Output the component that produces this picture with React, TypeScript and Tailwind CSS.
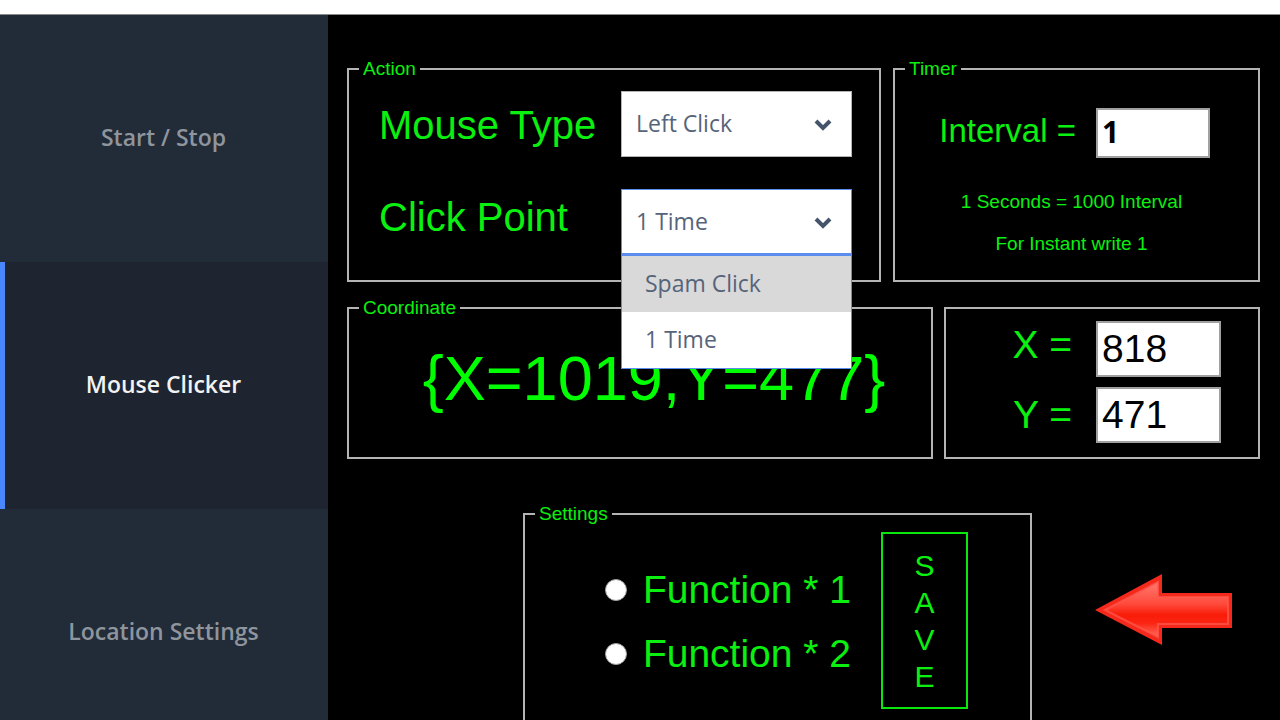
import React, { useState } from 'react';
import clsx from 'clsx';

// TYPES
type GroupBoxProps = {
  title: string;
  className?: string;
  children: React.ReactNode;
};

type ComboBoxProps = {
  id: string;
  value: string;
  options: string[];
  isOpen?: boolean;
  onChange: (value: string) => void;
};

// CONFIGS
const TABS = ['Start / Stop', 'Mouse Clicker', 'Location Settings'];
const MOUSE_TYPES = ['Left Click', 'Right Click'];
const CLICK_POINTS = ['Spam Click', '1 Time'];
const FUNCTIONS = ['Function * 1', 'Function * 2'];

const Chevron = () => (
  <svg
    viewBox="0 0 18 12"
    className="absolute right-5 top-7 w-[18px] h-3 pointer-events-none"
    fill="none"
    stroke="#44546a"
    strokeWidth="4"
  >
    <path d="M2 2l7 7 7-7" />
  </svg>
);

const ArrowLeft = () => (
  <svg viewBox="0 0 138 72" className="w-[138px] h-[72px]">
    <defs>
      <linearGradient id="arrowFill" x1="0" y1="0" x2="0" y2="1">
        <stop offset="0" stopColor="#ff7a70" />
        <stop offset="0.4" stopColor="#ff4a3c" />
        <stop offset="0.6" stopColor="#f81c08" />
        <stop offset="0.74" stopColor="#fb2412" />
        <stop offset="1" stopColor="#ff6a5c" />
      </linearGradient>
    </defs>
    <path d="M0 36L67 0v19h70v35H67v17z" fill="#f5281c" />
    <path
      d="M10 36L63 8v15h70v27H63v13z"
      fill="url(#arrowFill)"
      stroke="#ff5a4e"
      strokeWidth="2"
      strokeOpacity="0.7"
    />
  </svg>
);

const GroupBox = ({ title, className, children }: GroupBoxProps) => (
  <fieldset className={clsx('border-2 border-[#b4b4b4] min-w-0', className)}>
    <legend className="ml-2.5 px-1 text-[19px] leading-5">{title}</legend>
    {children}
  </fieldset>
);

const ComboBox = ({ id, value, options, isOpen, onChange }: ComboBoxProps) => (
  <div className="relative w-[231px] font-['Open_Sans',sans-serif] text-[23px] text-[#56647a]">
    <select
      id={id}
      value={value}
      onChange={(e) => onChange(e.target.value)}
      className={clsx(
        'block w-full h-[66px] appearance-none border bg-white pl-3.5 pb-0.5 outline-none',
        isOpen ? 'border-[#5b8dee]' : 'border-[#b4b4b4]',
      )}
    >
      {options.map((option) => (
        <option key={option}>{option}</option>
      ))}
    </select>
    <Chevron />
    {isOpen && (
      <ul className="absolute z-10 inset-x-0 top-16 border border-t-3 border-[#5b8dee] bg-white">
        {options.map((option, index) => (
          <li key={option}>
            <button
              type="button"
              onClick={() => onChange(option)}
              className={clsx(
                'block w-full h-14 pl-[23px] pb-0.5 text-left',
                index === 0 && 'bg-[#d9d9d9]',
              )}
            >
              {option}
            </button>
          </li>
        ))}
      </ul>
    )}
  </div>
);

const Sidebar = () => {
  const [activeTab, setActiveTab] = useState('Mouse Clicker');

  return (
    <nav className="w-[328px] shrink-0 bg-[#222b38]">
      {TABS.map((tab) => (
        <button
          key={tab}
          type="button"
          onClick={() => setActiveTab(tab)}
          className={clsx(
            "block w-full h-[247px] border-l-[5px] pr-1.5 pb-0.5 font-['Open_Sans',sans-serif] text-[23px] font-semibold",
            activeTab === tab
              ? 'border-[#4a86fc] bg-[#1e2530] text-[#f2f2f2]'
              : 'border-transparent text-[#8f959d]',
          )}
        >
          {tab}
        </button>
      ))}
    </nav>
  );
};

const App: React.FC = () => {
  const [mouseType, setMouseType] = useState('Left Click');
  const [clickPoint, setClickPoint] = useState('1 Time');

  return (
    <div className="h-screen flex flex-col overflow-hidden bg-black font-['Liberation_Sans',Arial,sans-serif] text-[#0af010]">
      <header className="h-[15px] shrink-0 border-b border-[#8a8a8a] bg-white" />
      <div className="flex flex-1 min-h-0">
        <Sidebar />

        <main className="flex-1 min-w-0 pl-[19px] pr-5 pt-11">
          <div className="flex gap-3">
            {/* Action */}
            <GroupBox title="Action" className="grow basis-[534px] h-[223px]">
              <div className="flex justify-between pl-[30px] pr-[27px]">
                <div className="flex flex-col gap-[52px] pt-[26px] text-[40px] leading-10">
                  <label htmlFor="mouseType">Mouse Type</label>
                  <label htmlFor="clickPoint">Click Point</label>
                </div>
                <div className="flex flex-col gap-8 pt-3">
                  <ComboBox
                    id="mouseType"
                    value={mouseType}
                    options={MOUSE_TYPES}
                    onChange={setMouseType}
                  />
                  <ComboBox
                    id="clickPoint"
                    value={clickPoint}
                    options={CLICK_POINTS}
                    isOpen
                    onChange={setClickPoint}
                  />
                </div>
              </div>
            </GroupBox>

            {/* Timer */}
            <GroupBox title="Timer" className="grow basis-[367px] h-[223px]">
              <div className="flex items-center justify-end gap-5 pr-12 pt-[29px]">
                <label
                  htmlFor="interval"
                  className="pb-1 text-[33px] leading-10"
                >
                  Interval =
                </label>
                <input
                  id="interval"
                  defaultValue="1"
                  className="w-[114px] h-[50px] border-2 border-[#a0a0a0] bg-white px-1 pb-1 font-['Open_Sans',sans-serif] text-3xl font-bold text-black"
                />
              </div>
              <div className="flex flex-col gap-[18px] pt-8 pr-2.5 text-center text-[19px] leading-6">
                <p>1 Seconds = 1000 Interval</p>
                <p>For Instant write 1</p>
              </div>
            </GroupBox>
          </div>

          <div className="flex gap-[11px] pt-4">
            {/* Coordinate */}
            <GroupBox
              title="Coordinate"
              className="grow basis-[586px] h-[161px]"
            >
              <output className="block pl-7 pt-6 text-center text-[63px] leading-[72px] text-[#00ff00]">
                {'{X=1019,Y=477}'}
              </output>
            </GroupBox>

            <div className="grow basis-[316px] mt-[9px] flex flex-col items-end gap-2.5 border-2 border-[#b4b4b4] pt-3 pr-[37px]">
              <div className="flex items-center gap-6">
                <label htmlFor="x" className="pb-2 text-[39px] leading-10">
                  X =
                </label>
                <input
                  id="x"
                  defaultValue="818"
                  className="w-[125px] h-14 border-2 border-[#a0a0a0] bg-white px-1 text-[39px] text-black"
                />
              </div>
              <div className="flex items-center gap-6">
                <label htmlFor="y" className="text-[39px] leading-10">
                  Y =
                </label>
                <input
                  id="y"
                  defaultValue="471"
                  className="w-[125px] h-14 border-2 border-[#a0a0a0] bg-white px-1 text-[39px] text-black"
                />
              </div>
            </div>
          </div>

          <div className="flex items-start justify-end pt-[45px] pr-[27px]">
            {/* Settings */}
            <GroupBox title="Settings" className="w-[509px] h-[240px]">
              <div className="flex items-start justify-end gap-[30px] pr-[62px]">
                <div className="flex flex-col gap-6 pt-[46px]">
                  {FUNCTIONS.map((name) => (
                    <label
                      key={name}
                      className="flex items-center gap-4 text-[39px] leading-10"
                    >
                      <input
                        type="radio"
                        name="function"
                        className="w-[22px] h-[22px] appearance-none rounded-full border border-[#a0a0a0] bg-white checked:border-[6px]"
                      />
                      {name}
                    </label>
                  ))}
                </div>
                <button
                  type="button"
                  className="flex justify-center items-center w-[87px] h-[177px] mt-2 border-2 border-[#0be60f]"
                >
                  <span className="w-8 break-all text-3xl leading-[37px]">
                    SAVE
                  </span>
                </button>
              </div>
            </GroupBox>

            <div className="pl-[63px] pt-[70px]">
              <ArrowLeft />
            </div>
          </div>
        </main>
      </div>
    </div>
  );
};

export default App;
